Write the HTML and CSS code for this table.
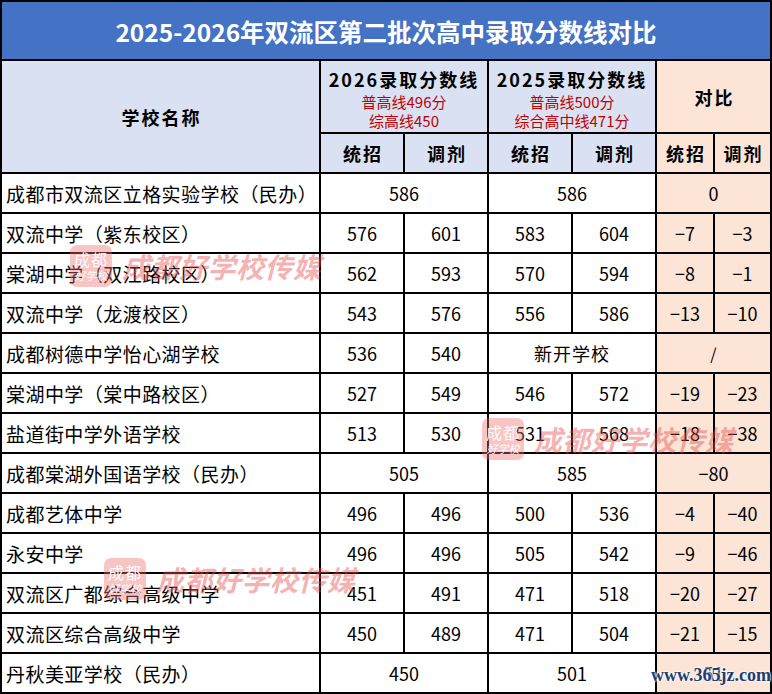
FILE: index.html
```html
<!DOCTYPE html>
<html lang="zh-CN">
<head>
<meta charset="utf-8">
<title>2025-2026年双流区第二批次高中录取分数线对比</title>
<link rel="stylesheet" href="styles.css">
</head>
<body>
<div class="page">
  <div class="sheet">
    <div class="cell title">2025-2026年双流区第二批次高中录取分数线对比</div>

    <div class="cell hd rs2 lbl">学校名称</div>
    <div class="cell hd cs2 group">
      <div class="gtitle">2026录取分数线</div>
      <div class="sub">普高线496分</div>
      <div class="sub">综高线450</div>
    </div>
    <div class="cell hd cs2 group">
      <div class="gtitle">2025录取分数线</div>
      <div class="sub">普高线500分</div>
      <div class="sub">综合高中线471分</div>
    </div>
    <div class="cell hd cmp cs2 lbl">对比</div>

    <div class="cell hd lbl">统招</div>
    <div class="cell hd lbl">调剂</div>
    <div class="cell hd lbl">统招</div>
    <div class="cell hd lbl">调剂</div>
    <div class="cell hd cmp lbl">统招</div>
    <div class="cell hd cmp lbl">调剂</div>

    <div class="cell name">成都市双流区立格实验学校（民办）</div>
    <div class="cell num cs2">586</div>
    <div class="cell num cs2">586</div>
    <div class="cell num cmp cs2">0</div>

    <div class="cell name">双流中学（紫东校区）</div>
    <div class="cell num">576</div>
    <div class="cell num">601</div>
    <div class="cell num">583</div>
    <div class="cell num">604</div>
    <div class="cell num cmp">−7</div>
    <div class="cell num cmp">−3</div>

    <div class="cell name">棠湖中学（双江路校区）</div>
    <div class="cell num">562</div>
    <div class="cell num">593</div>
    <div class="cell num">570</div>
    <div class="cell num">594</div>
    <div class="cell num cmp">−8</div>
    <div class="cell num cmp">−1</div>

    <div class="cell name">双流中学（龙渡校区）</div>
    <div class="cell num">543</div>
    <div class="cell num">576</div>
    <div class="cell num">556</div>
    <div class="cell num">586</div>
    <div class="cell num cmp">−13</div>
    <div class="cell num cmp">−10</div>

    <div class="cell name">成都树德中学怡心湖学校</div>
    <div class="cell num">536</div>
    <div class="cell num">540</div>
    <div class="cell num cs2 cjk">新开学校</div>
    <div class="cell num cmp cs2 slash">/</div>

    <div class="cell name">棠湖中学（棠中路校区）</div>
    <div class="cell num">527</div>
    <div class="cell num">549</div>
    <div class="cell num">546</div>
    <div class="cell num">572</div>
    <div class="cell num cmp">−19</div>
    <div class="cell num cmp">−23</div>

    <div class="cell name">盐道街中学外语学校</div>
    <div class="cell num">513</div>
    <div class="cell num">530</div>
    <div class="cell num">531</div>
    <div class="cell num">568</div>
    <div class="cell num cmp">−18</div>
    <div class="cell num cmp">−38</div>

    <div class="cell name">成都棠湖外国语学校（民办）</div>
    <div class="cell num cs2">505</div>
    <div class="cell num cs2">585</div>
    <div class="cell num cmp cs2">−80</div>

    <div class="cell name">成都艺体中学</div>
    <div class="cell num">496</div>
    <div class="cell num">496</div>
    <div class="cell num">500</div>
    <div class="cell num">536</div>
    <div class="cell num cmp">−4</div>
    <div class="cell num cmp">−40</div>

    <div class="cell name">永安中学</div>
    <div class="cell num">496</div>
    <div class="cell num">496</div>
    <div class="cell num">505</div>
    <div class="cell num">542</div>
    <div class="cell num cmp">−9</div>
    <div class="cell num cmp">−46</div>

    <div class="cell name">双流区广都综合高级中学</div>
    <div class="cell num">451</div>
    <div class="cell num">491</div>
    <div class="cell num">471</div>
    <div class="cell num">518</div>
    <div class="cell num cmp">−20</div>
    <div class="cell num cmp">−27</div>

    <div class="cell name">双流区综合高级中学</div>
    <div class="cell num">450</div>
    <div class="cell num">489</div>
    <div class="cell num">471</div>
    <div class="cell num">504</div>
    <div class="cell num cmp">−21</div>
    <div class="cell num cmp">−15</div>

    <div class="cell name">丹秋美亚学校（民办）</div>
    <div class="cell num cs2">450</div>
    <div class="cell num cs2">501</div>
    <div class="cell num cmp cs2">51</div>
  </div>

  <div class="wm wm1">
    <div class="wm-logo"><span class="wl-top">成都</span><span class="wl-bot">好学校</span></div>
    <span class="wm-text">成都好学校传媒</span>
  </div>
  <div class="wm wm2">
    <div class="wm-logo"><span class="wl-top">成都</span><span class="wl-bot">好学校</span></div>
    <span class="wm-text">成都好学校传媒</span>
  </div>
  <div class="wm wm3">
    <div class="wm-logo"><span class="wl-top">成都</span><span class="wl-bot">好学校</span></div>
    <span class="wm-text">成都好学校传媒</span>
  </div>

  <div class="site">www.365jz.com</div>
</div>
</body>
</html>
```

FILE: styles.css
```css
html, body {
  margin: 0;
  padding: 0;
  background: #ffffff;
}

.page {
  position: relative;
  width: 772px;
  height: 694px;
  overflow: hidden;
  font-family: "Noto Sans CJK SC", "Noto Sans", sans-serif;
  color: #000;
}

.sheet {
  box-sizing: border-box;
  width: 772px;
  display: grid;
  grid-template-columns: 317px 82px 82px 82px 82px 56px 55px;
  grid-template-rows: 57px 71px 38px repeat(13, 38px);
  gap: 2px;
  padding: 2px;
  background: #000;
}

.cell {
  background: #ffffff;
  display: flex;
  align-items: center;
  justify-content: center;
  white-space: nowrap;
}

.title {
  grid-column: 1 / 8;
  background: #4472c4;
  color: #ffffff;
  font-weight: 700;
  font-size: 24.5px;
  letter-spacing: 0;
  padding-top: 2px;
  box-sizing: border-box;
}

.hd {
  background: #d9e1f2;
}

.cmp {
  background: #fce4d6;
}

.rs2 {
  grid-row: span 2;
}

.cs2 {
  grid-column: span 2;
}

.lbl {
  font-weight: 700;
  font-size: 18px;
  letter-spacing: 2px;
  padding-left: 2px;
}

.group {
  flex-direction: column;
  justify-content: flex-start;
  padding-top: 6px;
  box-sizing: border-box;
}

.gtitle {
  font-weight: 700;
  font-size: 18px;
  letter-spacing: 2px;
  line-height: 24px;
  margin-bottom: 1px;
}

.sub {
  color: #c00000;
  font-size: 15px;
  line-height: 19px;
}

.name {
  justify-content: flex-start;
  padding-left: 4px;
  font-size: 19px;
  letter-spacing: 0.45px;
}

.num {
  font-size: 18px;
}

.cjk {
  font-size: 18px;
  letter-spacing: 1px;
}

.slash {
  font-size: 16px;
}

/* watermarks */
.wm {
  position: absolute;
  display: flex;
  align-items: center;
  gap: 10px;
  pointer-events: none;
}

.wm1 { left: 70px; top: 245px; }
.wm2 { left: 482px; top: 418px; }
.wm3 { left: 104px; top: 558px; }

.wm-logo {
  width: 42px;
  height: 42px;
  border-radius: 7px;
  background: rgba(238, 110, 110, 0.4);
  color: rgba(255, 255, 255, 0.95);
  display: flex;
  flex-direction: column;
  align-items: center;
  justify-content: center;
  line-height: 1;
}

.wl-top {
  font-size: 16px;
  letter-spacing: 1px;
}

.wl-bot {
  font-size: 11px;
  font-style: italic;
  margin-top: 3px;
}

.wm-text {
  font-size: 28px;
  font-weight: 700;
  font-style: italic;
  color: rgba(232, 80, 80, 0.45);
  letter-spacing: 0.5px;
}

.site {
  position: absolute;
  left: 651px;
  top: 665px;
  font-family: "Liberation Serif", "DejaVu Serif", serif;
  font-weight: 700;
  font-size: 18px;
  color: #1e3d72;
  text-shadow: 0 0 2px #fff, 0 0 2px #fff, 0 0 3px #fff;
}
```
